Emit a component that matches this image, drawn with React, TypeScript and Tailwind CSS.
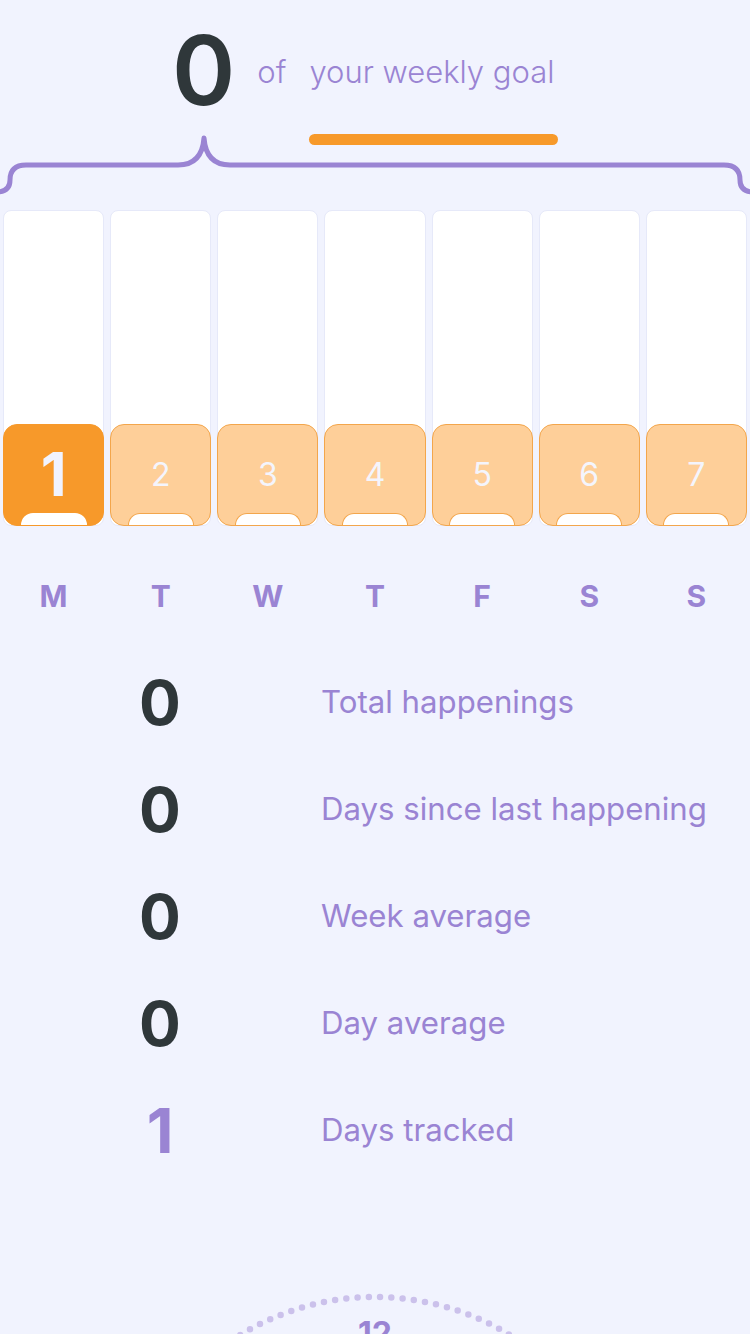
const days = ["M", "T", "W", "T", "F", "S", "S"];

const stats = [
  { value: "0", label: "Total happenings" },
  { value: "0", label: "Days since last happening" },
  { value: "0", label: "Week average" },
  { value: "0", label: "Day average" },
  { value: "1", label: "Days tracked", accent: true },
];

function Brace() {
  return (
    <svg width="750" height="70" viewBox="0 0 750 70" className="block">
      <path
        d="M -4 62 Q 10 62 10 50 Q 10 35 26 35 L 178 35 Q 202 35 204 8 Q 206 35 230 35 L 724 35 Q 740 35 740 50 Q 740 62 754 62"
        fill="none"
        stroke="#9a84d3"
        strokeWidth="5"
        strokeLinecap="round"
        strokeLinejoin="round"
      />
    </svg>
  );
}

function DayColumn({ n, active }: { n: number; active: boolean }) {
  return (
    <div className="relative flex h-[316px] flex-col justify-end rounded-[8px] border border-[#e6e9f9] bg-white">
      <div
        className={
          active
            ? "relative -mx-px -mb-px flex h-[102px] items-center justify-center overflow-hidden rounded-[14px] border border-[#f7992a] bg-[#f7992a]"
            : "relative -mx-px -mb-px flex h-[102px] items-center justify-center overflow-hidden rounded-[14px] border border-[#f3a64c] bg-[#fecf99]"
        }
      >
        {active ? (
          <span className="mb-[2px] text-[60px] font-bold leading-none text-[#f1f3fe]">{n}</span>
        ) : (
          <span className="mb-[1px] text-[32px] font-normal leading-none text-[#f4f5fd]">{n}</span>
        )}
        <div
          className={
            active
              ? "absolute bottom-[-1px] left-1/2 h-[13px] w-[66px] -translate-x-1/2 rounded-t-[12px] bg-white"
              : "absolute bottom-[-1px] left-1/2 h-[13px] w-[66px] -translate-x-1/2 rounded-t-[12px] border border-b-0 border-[#f3a64c] bg-white"
          }
        />
      </div>
    </div>
  );
}

export default function App() {
  return (
    <div
      className="h-[1334px] w-[750px] overflow-hidden bg-[#f1f3fe]"
      style={{ fontFamily: "Inter, 'Noto Sans', sans-serif" }}
    >
      <div className="h-[130px] pt-[22px] pl-[172px]">
        <div className="flex items-start">
          <div className="text-[96px] font-semibold leading-none text-[#2f373a]">0</div>
          <div className="ml-[22px] mt-[34px] text-[31px] font-light leading-none text-[#9a84d3]">of</div>
          <div className="ml-[23px] mt-[34px] flex flex-col">
            <div className="text-[31px] font-light leading-none text-[#9a84d3]">your weekly goal</div>
            <div className="mt-[47px] h-[11px] w-[249px] rounded-full bg-[#f7992a]" />
          </div>
        </div>
      </div>

      <Brace />

      <div className="mt-[10px] grid grid-cols-7 gap-[6px] px-[3px]">
        {days.map((_, i) => (
          <DayColumn key={i} n={i + 1} active={i === 0} />
        ))}
      </div>

      <div className="mt-[55px] grid grid-cols-7 gap-[6px] px-[3px]">
        {days.map((d, i) => (
          <div key={i} className="text-center text-[30px] font-bold leading-none text-[#9a84d3]">
            {d}
          </div>
        ))}
      </div>

      <div className="mt-[38px] flex flex-col">
        {stats.map((s, i) => (
          <div key={i} className="flex h-[107px] items-center">
            <div
              className={
                s.accent
                  ? "w-[320px] text-center text-[62px] font-bold leading-none text-[#9a84d3]"
                  : "w-[320px] text-center text-[62px] font-bold leading-none text-[#2f373a]"
              }
            >
              {s.value}
            </div>
            <div className="ml-[1px] text-[31.2px] leading-none text-[#9a84d3]">{s.label}</div>
          </div>
        ))}
      </div>

      <div className="relative mt-[105px] h-[300px]">
        <svg width="750" height="300" viewBox="0 0 750 300" className="block">
          <circle
            cx="375"
            cy="266"
            r="258"
            fill="none"
            stroke="#cbc1eb"
            strokeWidth="6.5"
            strokeLinecap="round"
            strokeDasharray="0 11.3"
          />
        </svg>
        <div className="absolute left-0 right-0 top-[29px] text-center text-[32px] font-bold leading-none text-[#9a84d3]">
          12
        </div>
      </div>
    </div>
  );
}
